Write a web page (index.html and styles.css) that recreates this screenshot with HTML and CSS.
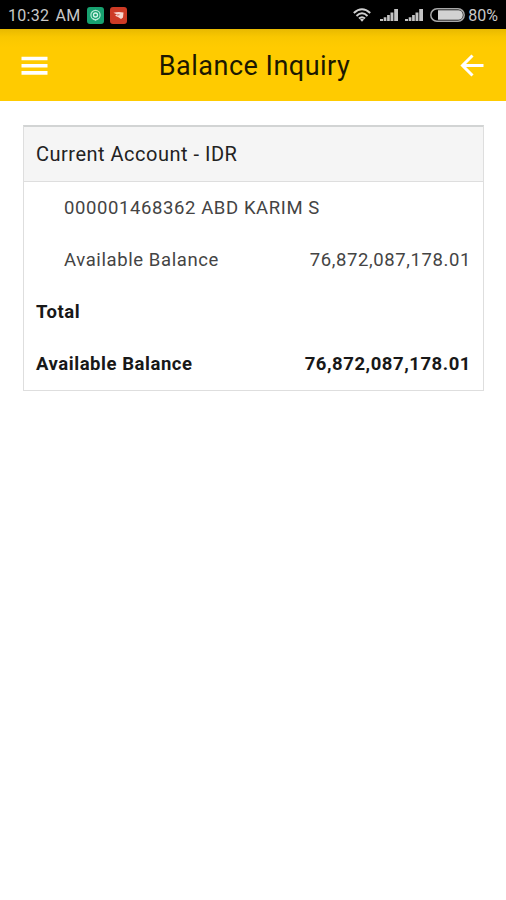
FILE: index.html
```html
<!DOCTYPE html>
<html lang="en">

<head>
    <meta charset="UTF-8">
    <meta name="viewport" content="width=device-width, initial-scale=1.0">
    <title>Balance Inquiry</title>
    <link rel="stylesheet" href="styles.css">
</head>

<body>
    <div class="status-bar">
        <span class="time">10:32 AM</span>
        <svg class="app-icon" width="17" height="17" viewBox="0 0 17 17">
            <rect width="17" height="17" rx="3" fill="#18a270" />
            <circle cx="8.5" cy="8" r="4.6" fill="none" stroke="#b5ead6" stroke-width="1.2" />
            <circle cx="8.5" cy="8" r="2" fill="none" stroke="#d5f5e9" stroke-width="1.3" />
            <path d="M6 11.5l2.5 2 2.5-2" fill="none" stroke="#b5ead6" />
        </svg>
        <svg class="app-icon" width="17" height="17" viewBox="0 0 17 17">
            <rect width="17" height="17" rx="3" fill="#cd3b25" />
            <path d="M3.5 5.800Q8 4.500 13.500 5.500L13 10.500 11 12 8 10 5 8.800 7 7.500z" fill="#f8d8d0" />
            <path d="M7 8l2.500-.3" stroke="#cd3b25" stroke-width=".8" />
        </svg>
        <div class="indicators">
            <svg class="wifi" width="18" height="14" viewBox="0 0 18 14">
                <g fill="none" stroke="#d0d0d0" stroke-width="2">
                    <path d="M.8 5Q9-2.500 17.200 5" />
                    <path d="M3.500 7.900Q9 2.700 14.500 7.900" />
                    <path d="M6 10.600Q9 7.800 12 10.600" />
                </g>
                <path d="M7 11.500Q9 10 11 11.500L9 13.800z" fill="#d0d0d0" />
            </svg>
            <svg class="signal" width="19" height="14" viewBox="0 0 19 14">
                <path d="M0 11h3v2H0zM3.700 9.200h2.700V13H3.700zM7.100 6.900h2.700V13H7.100zM10.500 4.500h2.900V13h-2.900zM14.200 1H18v12h-3.800z" fill="#c4c4c4" />
            </svg>
            <svg class="signal" width="19" height="14" viewBox="0 0 19 14">
                <path d="M0 11h3v2H0zM3.700 9.200h2.700V13H3.700zM7.100 6.900h2.700V13H7.100zM10.500 4.500h2.900V13h-2.900zM14.200 1H18v12h-3.800z" fill="#c4c4c4" />
            </svg>
            <svg class="battery" width="35" height="14" viewBox="0 0 35 14">
                <rect x=".8" y=".8" width="33.400" height="12.400" rx="6.200" fill="#000" stroke="#a8a8a8" stroke-width="1.500" />
                <path d="M8 2.200h20.500a4.300 4.300 0 0 1 4.300 4.300v1a4.300 4.300 0 0 1-4.300 4.300H8z" fill="#d2d2d2" />
            </svg>
            <span class="percent">80%</span>
        </div>
    </div>

    <header class="header">
        <svg width="28" height="20" viewBox="0 0 28 20">
            <path d="M.5 2.500h26M.5 9.700h26M.5 16.900h26" stroke="#fff" stroke-width="3.600" />
        </svg>
        <h1>Balance Inquiry</h1>
        <svg width="24" height="24" viewBox="0 0 24 24">
            <path d="M12.500 1.500L2.500 11.500 12.500 21.500M2.500 11.500H23.500" fill="none" stroke="#fff" stroke-width="3" />
        </svg>
    </header>

    <main class="card">
        <h2 class="card-title">Current Account - IDR</h2>
        <div class="row account">
            <span>000001468362 ABD KARIM S</span>
        </div>
        <div class="row account">
            <span>Available Balance</span>
            <span>76,872,087,178.01</span>
        </div>
        <div class="row total">
            <span>Total</span>
        </div>
        <div class="row total">
            <span>Available Balance</span>
            <span>76,872,087,178.01</span>
        </div>
    </main>
</body>

</html>
```

FILE: styles.css
```css
/* General Styles */
* {
    box-sizing: border-box;
}

body {
    margin: 0;
    min-height: 100vh;
    background-color: #fff;
    font-family: Roboto, sans-serif;
    color: #222;
}

svg {
    display: block;
    flex: none;
}

/* Status bar */
.status-bar {
    display: flex;
    align-items: center;
    height: 29px;
    padding: 1px 8px 0;
    background-color: #000;
    color: #c8c8c8;
    font-size: 16px;
}

.time {
    width: 72px;
    margin-right: 7px;
    white-space: nowrap;
    letter-spacing: 0.3px;
    word-spacing: 2px;
}

.app-icon {
    margin-right: 6px;
}

.indicators {
    display: flex;
    align-items: center;
    margin-left: auto;
}

.wifi {
    margin-right: 9px;
}

.signal {
    margin-right: 6px;
}

.battery {
    margin-right: 3px;
}

/* Header */
.header {
    display: flex;
    align-items: center;
    justify-content: space-between;
    height: 72px;
    padding: 2px 22px 0 21px;
    background: linear-gradient(#e8b900, #f9c700 8px, #ffcb00 18px);
}

.header h1 {
    margin: 0;
    color: #1c1800;
    font-size: 27px;
    font-weight: 400;
    letter-spacing: 0.5px;
}

/* Account card */
.card {
    margin: 24px 22px 0 23px;
    border: 1px solid #dedede;
    border-top: 2px solid #d2d4d4;
}

.card-title {
    display: flex;
    align-items: center;
    height: 55px;
    margin: 0;
    padding: 0 12px 1px;
    border-bottom: 1px solid #dedede;
    background-color: #f5f5f5;
    font-size: 20px;
    font-weight: 400;
    letter-spacing: 0.5px;
}

.row {
    display: flex;
    align-items: center;
    justify-content: space-between;
    height: 52px;
    padding: 0 12px;
    font-size: 18.5px;
    letter-spacing: 0.6px;
}

.account {
    padding-left: 40px;
    color: #444;
}

.total {
    color: #181818;
    font-weight: 700;
    letter-spacing: 0.55px;
}
```
